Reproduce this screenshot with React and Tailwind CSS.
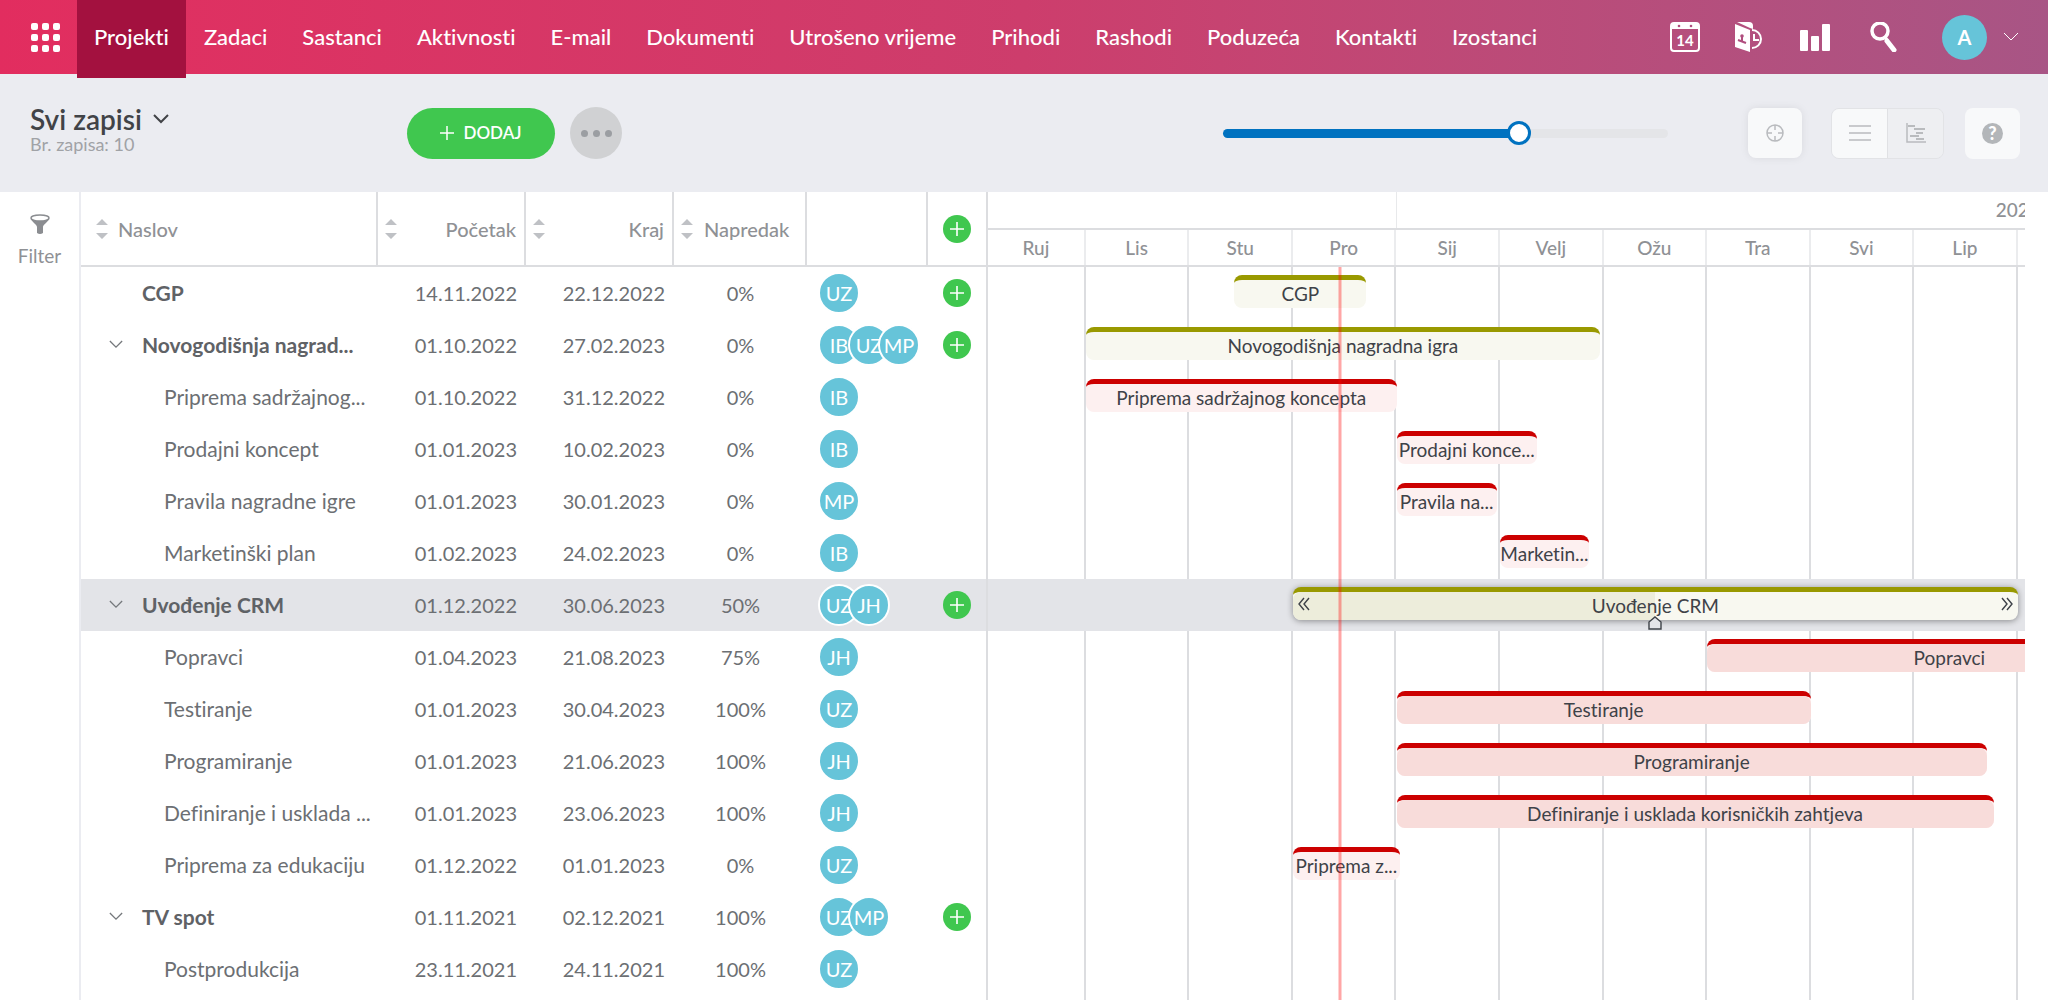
import React, { useState } from 'react';

const navItems = [
  'Projekti',
  'Zadaci',
  'Sastanci',
  'Aktivnosti',
  'E-mail',
  'Dokumenti',
  'Utrošeno vrijeme',
  'Prihodi',
  'Rashodi',
  'Poduzeća',
  'Kontakti',
  'Izostanci',
];

const rows = [
  { title: 'CGP', label: 'CGP', start: '14.11.2022', end: '22.12.2022', progress: 0, users: ['UZ'], parent: true },
  { title: 'Novogodišnja nagrad...', label: 'Novogodišnja nagradna igra', start: '01.10.2022', end: '27.02.2023', progress: 0, users: ['IB', 'UZ', 'MP'], parent: true, open: true },
  { title: 'Priprema sadržajnog...', label: 'Priprema sadržajnog koncepta', start: '01.10.2022', end: '31.12.2022', progress: 0, users: ['IB'] },
  { title: 'Prodajni koncept', label: 'Prodajni konce...', start: '01.01.2023', end: '10.02.2023', progress: 0, users: ['IB'] },
  { title: 'Pravila nagradne igre', label: 'Pravila na...', start: '01.01.2023', end: '30.01.2023', progress: 0, users: ['MP'] },
  { title: 'Marketinški plan', label: 'Marketin...', start: '01.02.2023', end: '24.02.2023', progress: 0, users: ['IB'] },
  { title: 'Uvođenje CRM', label: 'Uvođenje CRM', start: '01.12.2022', end: '30.06.2023', progress: 50, users: ['UZ', 'JH'], parent: true, open: true, selected: true },
  { title: 'Popravci', label: 'Popravci', start: '01.04.2023', end: '21.08.2023', progress: 75, users: ['JH'] },
  { title: 'Testiranje', label: 'Testiranje', start: '01.01.2023', end: '30.04.2023', progress: 100, users: ['UZ'] },
  { title: 'Programiranje', label: 'Programiranje', start: '01.01.2023', end: '21.06.2023', progress: 100, users: ['JH'] },
  { title: 'Definiranje i usklada ...', label: 'Definiranje i usklada korisničkih zahtjeva', start: '01.01.2023', end: '23.06.2023', progress: 100, users: ['JH'] },
  { title: 'Priprema za edukaciju', label: 'Priprema z...', start: '01.12.2022', end: '01.01.2023', progress: 0, users: ['UZ'] },
  { title: 'TV spot', start: '01.11.2021', end: '02.12.2021', progress: 100, users: ['UZ', 'MP'], parent: true, open: true },
  { title: 'Postprodukcija', start: '23.11.2021', end: '24.11.2021', progress: 100, users: ['UZ'] },
];

const months = ['Ruj', 'Lis', 'Stu', 'Pro', 'Sij', 'Velj', 'Ožu', 'Tra', 'Svi', 'Lip', ''];

// Timeline scale in percent of the chart width, 0 months = 1 October 2022
const FIRST = 9.44;
const MONTH = 9.985;
const monthX = (n) => FIRST + n * MONTH;

function dateX(date, endOfDay) {
  const [d, m, y] = date.split('.').map(Number);
  const days = new Date(y, m, 0).getDate();
  return monthX((y - 2022) * 12 + m - 10 + (endOfDay ? d : d - 1) / days);
}

function Chevron({ className }) {
  return (
    <svg viewBox="0 0 16 10" className={className} fill="none" stroke="currentColor" aria-hidden="true">
      <path d="M1 1l7 7 7-7" />
    </svg>
  );
}

function SortIcon() {
  return (
    <svg viewBox="0 0 12 20" className="h-5 w-3 shrink-0 fill-[#bfc1c5]" aria-hidden="true">
      <path d="M6 0l6 6H0zM6 20l6-6H0z" />
    </svg>
  );
}

function AddButton({ label }) {
  return (
    <button type="button" aria-label={label} className="block size-7 rounded-full bg-[#40c74f] text-white">
      <svg viewBox="0 0 28 28" className="size-7" fill="none" stroke="currentColor" strokeWidth="1.6">
        <path d="M14 7v14M7 14h14" />
      </svg>
    </button>
  );
}

function Avatars({ users }) {
  return (
    <div className="flex pl-[11px]">
      {users.map((u) => (
        <span key={u} className="-mr-3 flex size-[42px] items-center justify-center rounded-full border-2 border-white bg-[#66c4d9] text-xl text-white">
          {u}
        </span>
      ))}
    </div>
  );
}

function Header() {
  return (
    <header className="flex h-[74px] items-center bg-linear-to-r from-[#e22d5f] via-[#cd3d6c] to-[#a85585] text-white">
      <button type="button" aria-label="Izbornik" className="flex w-[77px] shrink-0 items-center justify-center pl-[14px]">
        <svg viewBox="0 0 29 29" className="size-[29px] fill-white">
          {[0, 11, 22].map((y) => [0, 11, 22].map((x) => <rect key={`${x}-${y}`} x={x} y={y} width="7" height="7" rx="2" />))}
        </svg>
      </button>
      <nav className="flex gap-px self-start">
        {navItems.map((item, i) => (
          <a
            key={item}
            href="#"
            className={`relative flex items-start px-[17px] pt-[22px] text-[22px] leading-[30px] font-medium whitespace-nowrap ${i === 0 ? 'h-[78px] bg-[#a3113f]' : 'h-[74px]'}`}
          >
            {item}
          </a>
        ))}
      </nav>
      <div className="ml-auto flex items-center pr-[29px]">
        <button type="button" aria-label="Kalendar">
          <svg viewBox="0 0 30 30" className="size-[30px]">
            <rect x="1" y="1" width="28" height="28" rx="3" fill="none" stroke="white" strokeWidth="2" />
            <path d="M1 3q0-2 2-2h24q2 0 2 2v4H1z" fill="white" />
            <circle cx="9" cy="4" r="1.3" fill="#b04e7e" />
            <circle cx="21" cy="4" r="1.3" fill="#b04e7e" />
            <text x="15" y="24" textAnchor="middle" fill="white" fontSize="15" fontWeight="700">14</text>
          </svg>
        </button>
        <button type="button" aria-label="Evidencija vremena" className="ml-[35px]">
          <svg viewBox="0 0 30 30" className="size-[30px]">
            <path d="M0 2L15 8v22L0 25z" fill="white" />
            <path d="M2 0h12q4 0 4 4v3l-3-1z" fill="white" />
            <circle cx="7" cy="14" r="1.8" fill="#b04e7e" />
            <path d="M7 15v4M3 18l8 3" stroke="#b04e7e" strokeWidth="2" />
            <path d="M17 8a9 9 0 1 1 0 18" fill="none" stroke="white" strokeWidth="2" />
            <path d="M19 12v6h5" fill="none" stroke="white" strokeWidth="2" />
          </svg>
        </button>
        <button type="button" aria-label="Izvještaji" className="ml-[35px]">
          <svg viewBox="0 0 30 30" className="size-[30px] fill-white">
            <rect y="8" width="8" height="21" rx="1" />
            <rect x="11" y="14" width="8" height="15" rx="1" />
            <rect x="22" y="2" width="8" height="27" rx="1" />
          </svg>
        </button>
        <button type="button" aria-label="Traži" className="ml-[39px]">
          <svg viewBox="0 0 30 30" className="size-[30px]" fill="none" stroke="white" strokeLinecap="round">
            <circle cx="11" cy="9" r="8" strokeWidth="3.5" />
            <path d="M16 15l2 3" strokeWidth="3" />
            <path d="M18 19l7 9" strokeWidth="5" />
          </svg>
        </button>
        <button type="button" className="ml-[43px] flex items-center gap-4">
          <span className="flex size-[45px] items-center justify-center rounded-full bg-[#66c4d9] text-xl font-bold">A</span>
          <Chevron className="h-[10px] w-4" />
        </button>
      </div>
    </header>
  );
}

function Toolbar() {
  const [zoom, setZoom] = useState(135);
  const filled = (zoom / 200) * 94.6 + 2.7;

  return (
    <div className="flex h-[118px] items-center bg-[#ebecf1] pr-7 pl-[30px]">
      <div className="w-[377px] shrink-0 pb-[6px]">
        <button type="button" aria-haspopup="menu" className="flex items-center gap-[11px] text-[28px] leading-[28px] font-semibold text-[#414347]">
          Svi zapisi
          <Chevron className="h-[10px] w-4 stroke-2" />
        </button>
        <p className="text-[18px] leading-[22px] text-[#a0a2a6]">Br. zapisa: 10</p>
      </div>
      <button type="button" className="flex h-[51px] w-[148px] items-center justify-center gap-[9px] rounded-full bg-[#40c74f] text-[17px] font-semibold text-white">
        <svg viewBox="0 0 14 14" className="size-[14px]" stroke="currentColor" strokeWidth="1.5" aria-hidden="true">
          <path d="M7 0v14M0 7h14" />
        </svg>
        DODAJ
      </button>
      <button type="button" aria-label="Više" className="ml-[15px] flex size-[52px] items-center justify-center gap-[5px] rounded-full bg-[#d0d1d3]">
        <span className="size-[7px] rounded-full bg-[#9b9ea2]" />
        <span className="size-[7px] rounded-full bg-[#9b9ea2]" />
        <span className="size-[7px] rounded-full bg-[#9b9ea2]" />
      </button>
      <input
        type="range"
        aria-label="Mjerilo"
        min="0"
        max="200"
        value={zoom}
        onChange={(e) => setZoom(Number(e.target.value))}
        className="ml-auto h-[9px] w-[445px] appearance-none rounded-full [&::-webkit-slider-thumb]:size-6 [&::-webkit-slider-thumb]:appearance-none [&::-webkit-slider-thumb]:rounded-full [&::-webkit-slider-thumb]:border-[3px] [&::-webkit-slider-thumb]:border-[#0072c0] [&::-webkit-slider-thumb]:bg-white"
        style={{ background: `linear-gradient(to right, #0072c0 ${filled}%, #e4e5e8 ${filled}%)` }}
      />
      <button type="button" aria-label="Danas" className="ml-20 flex h-[50px] w-[54px] items-center justify-center rounded-lg bg-[#f8f9fa] text-[#b9bbbe] shadow-[0_0_8px_rgba(0,0,0,0.08)]">
        <svg viewBox="0 0 18 18" className="size-[18px]" fill="none" stroke="currentColor" strokeWidth="1.5">
          <circle cx="9" cy="9" r="8" />
          <path d="M9 1v5M9 12v5M1 9h5M12 9h5" />
        </svg>
      </button>
      <div className="ml-[29px] flex h-[51px] w-[113px] overflow-hidden rounded-lg border border-[#e2e3e6] text-[#b9bbbe]">
        <button type="button" aria-label="Popis" className="flex flex-1 items-center justify-center border-r border-[#e0e1e4] bg-[#f8f9fa]">
          <svg viewBox="0 0 22 16" className="h-4 w-[22px]" stroke="currentColor" strokeWidth="1.5">
            <path d="M0 1h22M0 8h22M0 15h22" />
          </svg>
        </button>
        <button type="button" aria-label="Gantogram" className="flex flex-1 items-center justify-center bg-[#eeeff2]">
          <svg viewBox="0 0 20 20" className="size-5" fill="none" stroke="currentColor" strokeWidth="2">
            <path d="M1 0v19h19" strokeWidth="1.5" />
            <path d="M2 3h7M8 6h11M10 10h7M4 13h9M10 16h8" />
          </svg>
        </button>
      </div>
      <button type="button" aria-label="Pomoć" className="ml-[21px] flex h-[51px] w-[55px] items-center justify-center rounded-lg bg-[#f8f9fa]">
        <span className="flex size-[21px] items-center justify-center rounded-full bg-[#b3b6b9] text-lg leading-none font-black text-white">?</span>
      </button>
    </div>
  );
}

function TaskTable() {
  const th = 'h-[75px] border-r-2 border-b-2 border-[#dcdde0] p-0 font-medium';
  return (
    <table className="w-[907px] shrink-0 table-fixed border-separate border-spacing-0 text-xl text-[#6c6f73]">
      <colgroup>
        <col className="w-[297px]" />
        <col className="w-[148px]" />
        <col className="w-[148px]" />
        <col className="w-[133px]" />
        <col className="w-[121px]" />
        <col className="w-[60px]" />
      </colgroup>
      <thead className="text-[#8f9195]">
        <tr>
          <th className={th}>
            <div className="flex items-center gap-[10px] pl-[15px]"><SortIcon />Naslov</div>
          </th>
          <th className={th}>
            <div className="flex items-center justify-between pr-2 pl-[7px]"><SortIcon />Početak</div>
          </th>
          <th className={th}>
            <div className="flex items-center justify-between pr-2 pl-[7px]"><SortIcon />Kraj</div>
          </th>
          <th className={th}>
            <div className="flex items-center gap-[11px] pl-[7px]"><SortIcon />Napredak</div>
          </th>
          <th className={th} aria-label="Sudionici" />
          <th className={th}>
            <div className="flex justify-center"><AddButton label="Dodaj projekt" /></div>
          </th>
        </tr>
      </thead>
      <tbody>
        {rows.map((row) => (
          <tr key={row.title} className={row.selected ? 'bg-[#e3e4e8]' : ''}>
            <td className="h-[52px] p-0">
              <div className="flex items-center text-[21px] whitespace-nowrap">
                <span className="flex w-[61px] shrink-0 justify-end pr-[19px]">
                  {row.open && (
                    <button type="button" aria-label="Sažmi" className="text-[#75787c]">
                      <Chevron className="h-[9px] w-[14px] stroke-[1.5]" />
                    </button>
                  )}
                </span>
                <span className={row.parent ? 'font-bold text-[#5f6266]' : 'pl-[22px]'}>{row.title}</span>
              </div>
            </td>
            <td className="p-0 pr-[9px] text-right">{row.start}</td>
            <td className="p-0 pr-[9px] text-right">{row.end}</td>
            <td className="p-0 text-center">{row.progress}%</td>
            <td className="p-0"><Avatars users={row.users} /></td>
            <td className="border-r-2 border-[#dcdde0] p-0">
              {row.parent && <div className="flex justify-center"><AddButton label={`Dodaj u ${row.title}`} /></div>}
            </td>
          </tr>
        ))}
      </tbody>
    </table>
  );
}

function Bar({ row }) {
  const left = dateX(row.start);
  const width = dateX(row.end, true) - left;
  return (
    <div
      className={`absolute top-2 h-[33px] rounded-lg border-t-[5px] ${row.parent ? 'border-[#999900] bg-[#f8f8f0]' : 'border-[#cc0000] bg-[#fdf0f0]'} ${row.selected ? 'shadow-[0_1px_6px_rgba(0,0,0,0.4)]' : ''}`}
      style={{ left: `${left}%`, width: `${width}%` }}
    >
      <div
        className={`absolute inset-y-0 left-0 rounded-l-lg ${row.parent ? 'bg-[#ededdb]' : 'rounded-r-lg bg-[#f8dcda]'}`}
        style={{ width: `${row.progress}%` }}
      />
      <p className="relative text-center text-[19px] leading-[28px] whitespace-nowrap text-[#3e4248]">{row.label}</p>
      {row.selected && (
        <>
          <svg viewBox="0 0 12 14" className="absolute top-[5px] left-[5px] h-[14px] w-3" fill="none" stroke="#3e4248" strokeWidth="1.4">
            <path d="M6 1L1 7l5 6M11 1L6 7l5 6" />
          </svg>
          <svg viewBox="0 0 12 14" className="absolute top-[5px] right-[5px] h-[14px] w-3" fill="none" stroke="#3e4248" strokeWidth="1.4">
            <path d="M1 1l5 6-5 6M6 1l5 6-5 6" />
          </svg>
          <svg viewBox="0 0 14 14" className="absolute top-6 left-1/2 size-[14px] -translate-x-1/2" fill="#e3e4e8" stroke="#3e4248" strokeWidth="1.4">
            <path d="M1 13V6l6-5 6 5v7z" />
          </svg>
        </>
      )}
    </div>
  );
}

function Timeline() {
  return (
    <div className="min-w-0 flex-1 pr-[23px]">
      <div className="flex h-full flex-col overflow-hidden">
        <div className="flex h-[38px] shrink-0 border-b-2 border-[#dcdde0] text-[19px] leading-[36px] font-medium text-[#8f9195]">
          <div className="shrink-0 border-r border-[#e8e9eb]" style={{ width: `${monthX(3)}%` }} />
          <div className="shrink-0 text-center" style={{ width: `${MONTH * 12}%` }}>2023</div>
        </div>
        <div className="flex h-[37px] shrink-0 border-b-2 border-[#dcdde0] text-[19px] leading-[36px] font-medium text-[#8f9195]">
          {months.map((m, i) => (
            <div
              key={i}
              className="shrink-0 border-r-2 border-[#ebecee] text-center"
              style={{ width: `${i === 0 ? FIRST : MONTH}%` }}
            >
              {m}
            </div>
          ))}
        </div>
        <div className="relative flex-1">
          <div className="absolute inset-0 flex">
            {months.map((m, i) => (
              <div key={i} className="shrink-0 border-r-2 border-[#dcdde0]" style={{ width: `${i === 0 ? FIRST : MONTH}%` }} />
            ))}
          </div>
          {rows.map((row) => (
            <div key={row.title} className={`relative h-[52px] ${row.selected ? 'bg-[#e3e4e8]' : ''}`}>
              {row.label && <Bar row={row} />}
            </div>
          ))}
          <div className="absolute inset-y-0 w-[3px] -translate-x-1/2 bg-[#ff0000]/35" style={{ left: `${dateX('14.12.2022', true)}%` }} />
        </div>
      </div>
    </div>
  );
}

function App() {
  return (
    <div className="flex min-h-screen flex-col bg-white font-['Lato','Liberation_Sans',sans-serif] [font-variant-ligatures:none]">
      <Header />
      <Toolbar />
      <main className="flex flex-1 items-stretch">
        <aside className="w-[79px] shrink-0 pt-[22px]">
          <button type="button" className="flex w-full flex-col items-center gap-[10px] text-[19px] leading-6 text-[#8f9195]">
            <svg viewBox="0 0 20 20" className="size-5" aria-hidden="true">
              <path d="M1 4C1 8 7 10 7 13v6q3 2 6 0v-6c0-3 6-5 6-9z" fill="#8b8d91" />
              <ellipse cx="10" cy="4" rx="9" ry="3" fill="white" stroke="#8b8d91" strokeWidth="1.5" />
            </svg>
            Filter
          </button>
        </aside>
        <div className="flex min-w-0 flex-1 items-stretch border-l-2 border-[#ebecf1]">
          <div className="flex shrink-0 flex-col">
            <TaskTable />
            <div className="flex-1 border-r-2 border-[#dcdde0]" />
          </div>
          <Timeline />
        </div>
      </main>
    </div>
  );
}

export default App;
